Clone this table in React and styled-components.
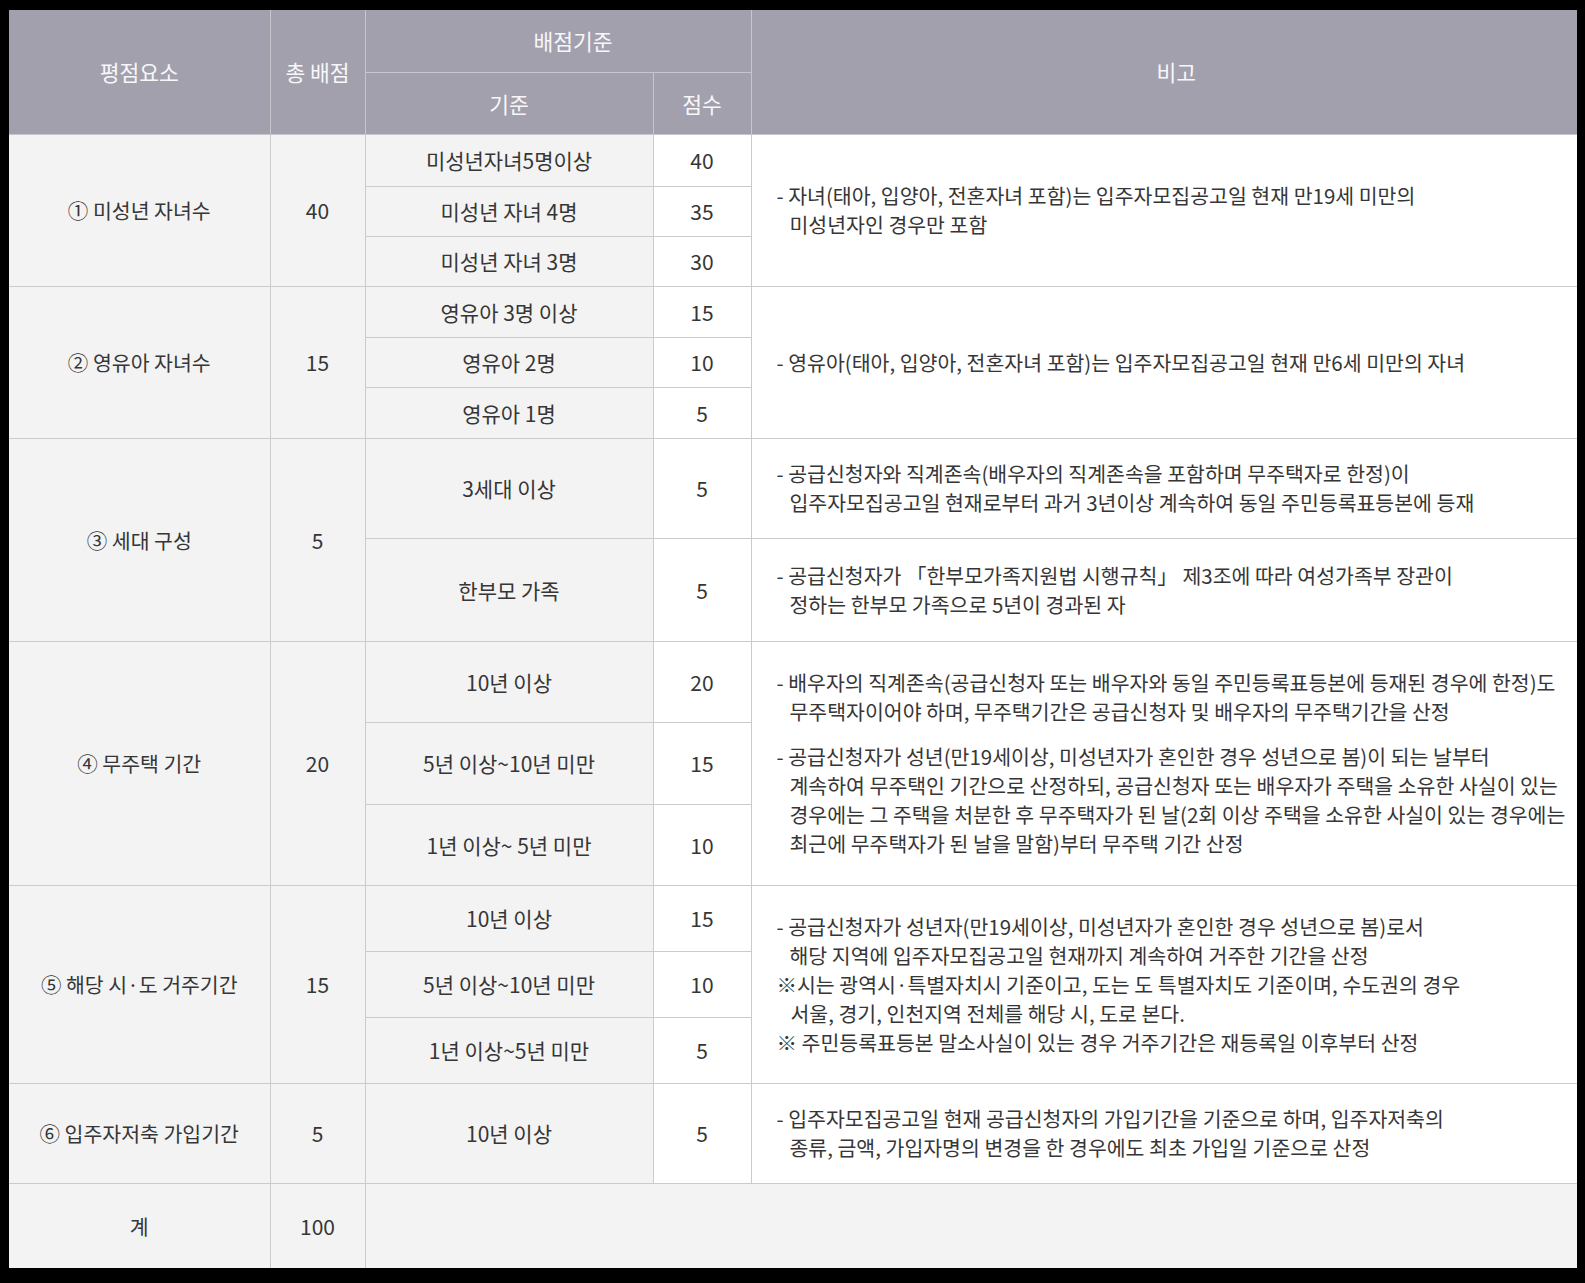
import React from "react";
import styled, { createGlobalStyle } from "styled-components";

const GlobalStyle = createGlobalStyle`
  html, body {
    margin: 0;
    background: #000;
  }
  body {
    padding: 10px 0 15px 9px;
    font-family: "Noto Sans CJK KR", "Noto Sans", sans-serif;
  }
`;

const Table = styled.table`
  width: 1568px;
  border-collapse: collapse;
  border-style: hidden;
  table-layout: fixed;
  font-size: 21px;
  color: #363636;
`;

const Row = styled.tr`
  height: ${(p) => p.$h}px;
`;

const HeadCell = styled.th`
  background: #a3a0ad;
  color: #f7f7f9;
  font-weight: 400;
  font-size: 21.5px;
  border: 1px solid #c8c6cd;
  text-align: center;
  vertical-align: middle;
  padding: 0 0 0 ${(p) => p.$shift || 0}px;
`;

const Cell = styled.td`
  background: ${(p) => (p.$white ? "#ffffff" : "#f3f3f3")};
  border: 1px solid #cbcbcb;
  font-size: ${(p) => p.$size || 21}px;
  text-align: center;
  vertical-align: middle;
  padding: 0;
  white-space: nowrap;
`;

const NoteCell = styled.td`
  background: ${(p) => (p.$grey ? "#f3f3f3" : "#ffffff")};
  border: 1px solid #cbcbcb;
  font-size: 20.5px;
  text-align: left;
  vertical-align: middle;
  padding: 0 0 0 25px;
  line-height: 29px;
  white-space: nowrap;
`;

const Para = styled.div`
  margin-top: ${(p) => p.$gap || 0}px;
`;

const Line = styled.div`
  padding-left: ${(p) => p.$indent || 0}px;
`;

const sections = [
  {
    label: "① 미성년 자녀수",
    total: "40",
    items: [
      ["미성년자녀5명이상", "40", 52],
      ["미성년 자녀 4명", "35", 50],
      ["미성년 자녀 3명", "30", 50],
    ],
    notes: [
      [
        ["- 자녀(태아, 입양아, 전혼자녀 포함)는 입주자모집공고일 현재 만19세 미만의", 0],
        ["미성년자인 경우만 포함", 13],
      ],
    ],
  },
  {
    label: "② 영유아 자녀수",
    total: "15",
    items: [
      ["영유아 3명 이상", "15", 51],
      ["영유아 2명", "10", 50],
      ["영유아 1명", "5", 51],
    ],
    notes: [
      [["- 영유아(태아, 입양아, 전혼자녀 포함)는 입주자모집공고일 현재 만6세 미만의 자녀", 0]],
    ],
  },
  {
    label: "③ 세대 구성",
    total: "5",
    items: [
      [
        "3세대 이상",
        "5",
        100,
        [
          [
            ["- 공급신청자와 직계존속(배우자의 직계존속을 포함하며 무주택자로 한정)이", 0],
            ["입주자모집공고일 현재로부터 과거 3년이상 계속하여 동일 주민등록표등본에 등재", 13],
          ],
        ],
      ],
      [
        "한부모 가족",
        "5",
        103,
        [
          [
            ["- 공급신청자가 「한부모가족지원법 시행규칙」 제3조에 따라 여성가족부 장관이", 0],
            ["정하는 한부모 가족으로 5년이 경과된 자", 13],
          ],
        ],
      ],
    ],
  },
  {
    label: "④ 무주택 기간",
    total: "20",
    gap: 16,
    items: [
      ["10년 이상", "20", 81],
      ["5년 이상~10년 미만", "15", 82],
      ["1년 이상~ 5년 미만", "10", 81],
    ],
    notes: [
      [
        ["- 배우자의 직계존속(공급신청자 또는 배우자와 동일 주민등록표등본에 등재된 경우에 한정)도", 0],
        ["무주택자이어야 하며, 무주택기간은 공급신청자 및 배우자의 무주택기간을 산정", 13],
      ],
      [
        ["- 공급신청자가 성년(만19세이상, 미성년자가 혼인한 경우 성년으로 봄)이 되는 날부터", 0],
        ["계속하여 무주택인 기간으로 산정하되, 공급신청자 또는 배우자가 주택을 소유한 사실이 있는", 13],
        ["경우에는 그 주택을 처분한 후 무주택자가 된 날(2회 이상 주택을 소유한 사실이 있는 경우에는", 13],
        ["최근에 무주택자가 된 날을 말함)부터 무주택 기간 산정", 13],
      ],
    ],
  },
  {
    label: "⑤ 해당 시·도 거주기간",
    total: "15",
    items: [
      ["10년 이상", "15", 66],
      ["5년 이상~10년 미만", "10", 66],
      ["1년 이상~5년 미만", "5", 66],
    ],
    notes: [
      [
        ["- 공급신청자가 성년자(만19세이상, 미성년자가 혼인한 경우 성년으로 봄)로서", 0],
        ["해당 지역에 입주자모집공고일 현재까지 계속하여 거주한 기간을 산정", 13],
      ],
      [
        ["※시는 광역시·특별자치시 기준이고, 도는 도 특별자치도 기준이며, 수도권의 경우", 0],
        ["서울, 경기, 인천지역 전체를 해당 시, 도로 본다.", 14],
      ],
      [["※ 주민등록표등본 말소사실이 있는 경우 거주기간은 재등록일 이후부터 산정", 0]],
    ],
  },
  {
    label: "⑥ 입주자저축 가입기간",
    total: "5",
    items: [["10년 이상", "5", 100]],
    notes: [
      [
        ["- 입주자모집공고일 현재 공급신청자의 가입기간을 기준으로 하며, 입주자저축의", 0],
        ["종류, 금액, 가입자명의 변경을 한 경우에도 최초 가입일 기준으로 산정", 13],
      ],
    ],
  },
];

const Notes = ({ paras, gap, rowSpan }) => (
  <NoteCell rowSpan={rowSpan}>
    {paras.map((lines, i) => (
      <Para key={i} $gap={i > 0 ? gap : 0}>
        {lines.map(([text, indent], j) => (
          <Line key={j} $indent={indent}>
            {text}
          </Line>
        ))}
      </Para>
    ))}
  </NoteCell>
);

export default function App() {
  return (
    <>
      <GlobalStyle />
      <Table>
        <colgroup>
          <col style={{ width: 261 }} />
          <col style={{ width: 95 }} />
          <col style={{ width: 288 }} />
          <col style={{ width: 98 }} />
          <col style={{ width: 826 }} />
        </colgroup>
        <thead>
          <Row $h={62}>
            <HeadCell rowSpan={2}>평점요소</HeadCell>
            <HeadCell rowSpan={2}>총 배점</HeadCell>
            <HeadCell colSpan={2} $shift={30}>배점기준</HeadCell>
            <HeadCell rowSpan={2} $shift={24}>비고</HeadCell>
          </Row>
          <Row $h={62}>
            <HeadCell>기준</HeadCell>
            <HeadCell>점수</HeadCell>
          </Row>
        </thead>
        <tbody>
          {sections.map((s) =>
            s.items.map(([crit, score, h, itemNotes], i) => (
              <Row key={s.label + i} $h={h}>
                {i === 0 && (
                  <Cell rowSpan={s.items.length} $size={20.5}>
                    {s.label}
                  </Cell>
                )}
                {i === 0 && <Cell rowSpan={s.items.length}>{s.total}</Cell>}
                <Cell>{crit}</Cell>
                <Cell $white>{score}</Cell>
                {itemNotes && <Notes paras={itemNotes} />}
                {i === 0 && s.notes && (
                  <Notes paras={s.notes} gap={s.gap} rowSpan={s.items.length} />
                )}
              </Row>
            ))
          )}
          <Row $h={85}>
            <Cell $size={20.5}>계</Cell>
            <Cell>100</Cell>
            <NoteCell $grey colSpan={3} />
          </Row>
        </tbody>
      </Table>
    </>
  );
}
